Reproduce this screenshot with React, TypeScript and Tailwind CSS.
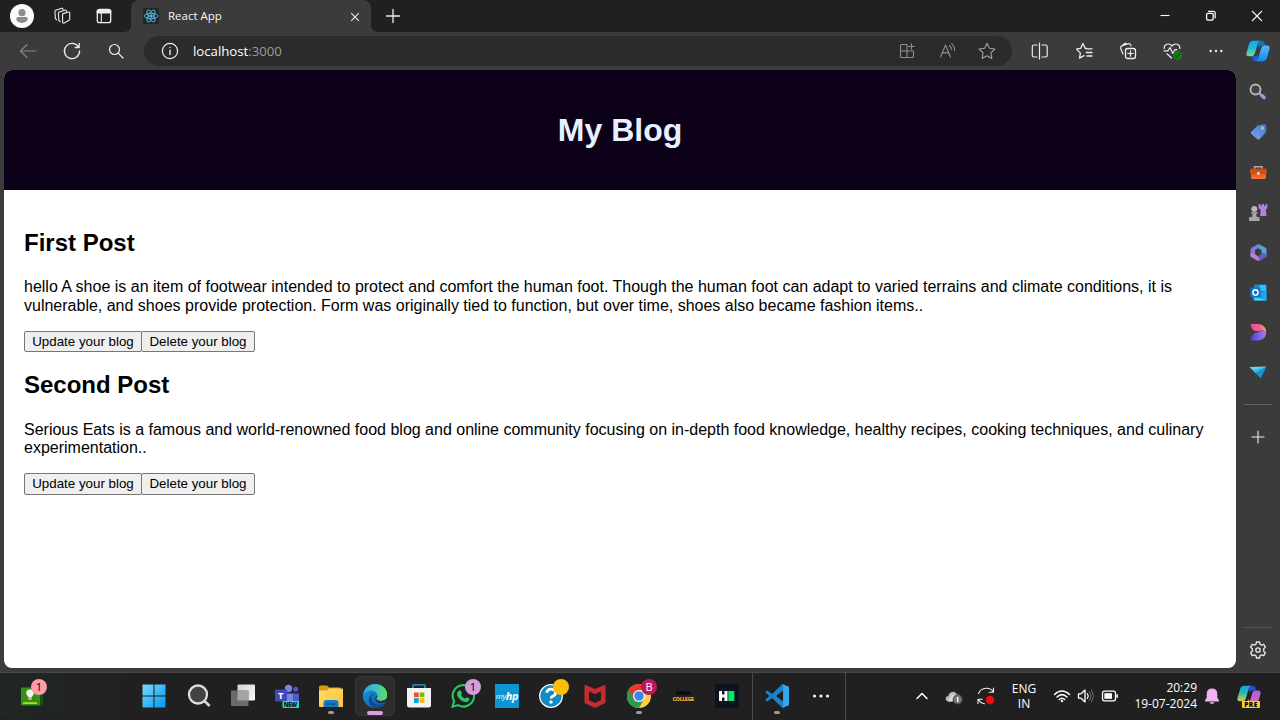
import type { ReactNode } from "react";

type IconProps = { children: ReactNode; className?: string };

function Icon({ children, className = "" }: IconProps) {
  return (
    <svg viewBox="0 0 24 24" className={`h-6 w-6 shrink-0 ${className}`} fill="none">
      {children}
    </svg>
  );
}

function Line({ children, className = "text-[#ededed]" }: IconProps) {
  return (
    <svg
      viewBox="0 0 24 24"
      className={`h-6 w-6 shrink-0 ${className}`}
      fill="none"
      stroke="currentColor"
      strokeWidth="1.1"
      strokeLinecap="round"
      strokeLinejoin="round"
    >
      {children}
    </svg>
  );
}

function Slot({ children, className = "w-11" }: IconProps) {
  return <div className={`relative flex h-full shrink-0 items-center justify-center ${className}`}>{children}</div>;
}

function SideSlot({ children, className = "h-10" }: IconProps) {
  return <div className={`flex w-11 shrink-0 items-center justify-center ${className}`}>{children}</div>;
}

function TitleBar() {
  return (
    <div className="flex h-8 bg-[#202020] pl-0.5">
      <Slot className="w-10">
        <Icon>
          <circle cx="12" cy="12" r="12" fill="#fbfbfb" />
          <circle cx="12" cy="8.7" r="3.6" fill="#8d8d8d" />
          <path d="M6.3 14.6q0-1.5 1.6-1.5h8.2q1.6 0 1.6 1.5c0 3-2.700 4.300-5.700 4.300s-5.700-1.300-5.700-4.300z" fill="#8d8d8d" />
        </Icon>
      </Slot>
      <Slot className="w-10">
        <Line>
          <path d="M12.500 10.700q0-.8.800-1.100l5.200-1.600q1.200-.3 1.200.9v6.200q0 .8-.7 1.200l-4.700 2.700q-1.500.7-1.600-.7z" />
          <path d="M10.300 17.700l-1.400-1.200-.5-7.200q0-.9.800-1.200l6.200-2.100q.8-.2 1.200 1.300M6.700 15.800l-1.300-1.200-.5-7.200q0-.9.800-1.200l6.200-2q.8-.2 1.200 1.300" />
        </Line>
      </Slot>
      <Slot>
        <Line>
          <rect x="5.300" y="5.300" width="13.400" height="13.400" rx="2.200" strokeWidth="1.300" />
          <path d="M5.300 6.500h13.400v2.500H5.300z" fill="currentColor" />
          <path d="M9.300 9v9.500" />
        </Line>
      </Slot>
      <div className="relative ml-[5px] flex h-8 w-[240px] items-center rounded-t-lg bg-[#3b3b3b] pl-3">
        <span className="absolute bottom-0 -left-1.5 h-1.5 w-1.5 bg-[radial-gradient(circle_at_0_0,#202020_5.500px,#3b3b3b_6px)]" />
        <span className="absolute -right-1.5 bottom-0 h-1.5 w-1.5 bg-[radial-gradient(circle_at_100%_0,#202020_5.500px,#3b3b3b_6px)]" />
        <svg viewBox="0 0 16 16" className="h-4 w-4" fill="none" stroke="#58c4dc" strokeWidth=".85">
          <rect width="16" height="16" rx="1.500" fill="#20242b" stroke="none" />
          <ellipse cx="8" cy="8" rx="6.800" ry="2.700" />
          <ellipse cx="8" cy="8" rx="6.800" ry="2.700" transform="rotate(60 8 8)" />
          <ellipse cx="8" cy="8" rx="6.800" ry="2.700" transform="rotate(120 8 8)" />
          <circle cx="8" cy="8" r="1.200" fill="#58c4dc" />
        </svg>
        <span className="ml-[9px] text-[11.500px] text-[#f5f5f5]">React App</span>
        <svg viewBox="0 0 10 10" className="mt-px mr-[11px] ml-auto h-2.5 w-2.5" stroke="#f0f0f0" strokeWidth="1.100">
          <path d="M1.200 1.200l7.600 7.600M8.800 1.200L1.200 8.800" />
        </svg>
      </div>
      <Slot className="w-[43px]">
        <Line><path d="M12 5.500v13M5.500 12h13" strokeWidth="1.300" /></Line>
      </Slot>
      <div className="ml-auto flex h-8">
        <Slot className="w-[46px]">
          <Line className="text-white"><path d="M7.500 11.500h9" strokeLinecap="butt" /></Line>
        </Slot>
        <Slot className="w-[46px]">
          <Line className="text-white">
            <rect x="7.600" y="9.300" width="6.600" height="6.800" rx="1.300" strokeWidth="1.300" />
            <path d="M9.500 7.300h4.700q2 0 2 2v4.500" strokeWidth="1.200" />
          </Line>
        </Slot>
        <Slot className="w-[46px]">
          <Line className="text-white"><path d="M7.400 7.400l9.200 9.200M16.600 7.400l-9.200 9.200" strokeWidth="1.300" /></Line>
        </Slot>
      </div>
    </div>
  );
}

function CopilotMark({ preview = false }: { preview?: boolean }) {
  const id = preview ? "cpPre" : "cpTop";
  return (
    <svg viewBox="0 0 24 24" className="h-6 w-6 shrink-0">
      <defs>
        <linearGradient id={id + "L"} x1="0" y1="0" x2="0" y2="1">
          <stop offset="0" stopColor="#16a4e8" />
          <stop offset=".45" stopColor={preview ? "#24b9b0" : "#21b7d8"} />
          <stop offset="1" stopColor={preview ? "#e2ce35" : "#6fe08c"} />
        </linearGradient>
        <linearGradient id={id + "R"} x1="0" y1="0" x2="0" y2="1">
          <stop offset="0" stopColor={preview ? "#a55fe8" : "#56b5ff"} />
          <stop offset="1" stopColor={preview ? "#f06590" : "#1488ee"} />
        </linearGradient>
      </defs>
      <path d="M11 1.800h4.600c2 0 2.500 1 3 2.700l.7 2.100h-3.500c-1.800 0-2.500 1-3 2.800z" fill={preview ? "#1d4fd0" : "#147ba8"} />
      <path d="M13 22.200H9.200c-1.900 0-2.400-1-2.900-2.600l-.8-2.300H9c1.800 0 2.400-1 3-2.800z" fill={preview ? "#f08a48" : "#2359d8"} />
      <path d="M7.600 1.800h6.300c-1.500.6-1.900 2-2.400 3.700l-2.600 8.800c-.6 2.100-1.500 3-3.300 3H3c-2.400 0-3-1.700-2.400-3.800l2.600-8.800c.7-2.100 2-2.900 4.400-2.900z" fill={`url(#${id}L)`} />
      <path d="M16.400 22.200h-6.300c1.500-.6 1.900-2 2.400-3.700l2.600-8.900c.6-2.100 1.500-3 3.300-3H21c2.400 0 3 1.700 2.400 3.800l-2.600 8.900c-.7 2.100-2 2.900-4.400 2.900z" fill={`url(#${id}R)`} />
    </svg>
  );
}

function Toolbar() {
  return (
    <div className="flex h-[38px] bg-[#3b3b3b] pl-1.5">
      <Slot>
        <Line className="text-[#858585]"><path d="M20 12H4.500M11 5.500L4.500 12l6.500 6.500" /></Line>
      </Slot>
      <Slot>
        <Line><path d="M18.600 8.200A7.600 7.600 0 1 0 19.600 12M19.200 4.500v4h-4" strokeWidth="1.300" /></Line>
      </Slot>
      <Slot>
        <Line><circle cx="10.500" cy="10.500" r="5" strokeWidth="1.200" /><path d="M14.200 14.200l4.800 4.800" strokeWidth="1.200" /></Line>
      </Slot>
      <div className="mt-1 ml-1.5 flex h-[30px] w-[868px] items-center rounded-full bg-[#2b2b2b] pr-[5px] pl-3.5">
        <Line>
          <circle cx="12" cy="12" r="7.600" strokeWidth="1.200" />
          <path d="M12 11.300v4.300M12 8.400v.2" strokeWidth="1.400" />
        </Line>
        <span className="mt-0.5 ml-[11px] text-[13.200px] text-white">
          localhost<span className="text-[#9b9b9b]">:3000</span>
        </span>
        <div className="ml-auto flex h-full">
          <Slot className="w-10">
            <Line className="text-[#8f8f8f]">
              <path d="M11.700 5.500H6.500q-1 0-1 1v11q0 1 1 1h11q1 0 1-1v-4.800q0-.7-.7-.7H5.500M12 5.500v13M16.500 4.800v5.400M13.800 7.500h5.400" />
            </Line>
          </Slot>
          <Slot className="w-10">
            <Line className="text-[#8f8f8f]">
              <path d="M5.500 18L10.500 6l5 12M7.300 13.900h6.400M14.500 6.700q2 1.600 1.800 3.800M16.600 4.600q3.200 2.600 3 6.900" />
            </Line>
          </Slot>
          <Slot className="w-10">
            <Line className="text-[#a0a0a0]">
              <path d="M12 4.200l2.400 5 5.500.8-4 3.900 1 5.500-4.900-2.600-4.900 2.600 1-5.500-4-3.900 5.500-.8z" />
            </Line>
          </Slot>
        </div>
      </div>
      <div className="ml-1.5 flex">
        <Slot>
          <Line>
            <path d="M11.500 4v16M9 6H6q-1.700 0-1.700 1.700v8.600Q4.300 18 6 18h3M14 6h3.500q1.700 0 1.700 1.700v8.600q0 1.700-1.700 1.700H14" strokeWidth="1.200" />
          </Line>
        </Slot>
        <Slot>
          <Line>
            <path d="M14.500 9.500h-1.200L10.900 4.500 8.700 9.300l-3.500.5q-.8.200-.2.800l3.400 3.500-.9 5 4.600-2.500M15 9.800h5M14.300 13.500h5.700M15 17h5" strokeWidth="1.300" />
          </Line>
        </Slot>
        <Slot>
          <Line>
            <rect x="9.500" y="9.500" width="10" height="10" rx="2.200" strokeWidth="1.300" />
            <path d="M14.500 11.800v5.400M11.800 14.500h5.400M7 15l-2.300-5.800q-.5-1.700 1.100-2.300l6.500-2.100q1.700-.4 2.300 1.100l.3 1M5 7.700l3-2.700q1-.8 2.300-.6" strokeWidth="1.200" />
          </Line>
        </Slot>
        <Slot>
          <Line>
            <path d="M4.200 9.500C3.800 5.300 9 3.300 12 7c3-3.700 8.200-1.700 7.800 2.500M4 11.800h4l2-3.300 2.800 6 2-3.800h2M7 14.800l4.500 4.200" strokeWidth="1.200" />
            <circle cx="17.500" cy="16.500" r="4.700" fill="#147a14" stroke="none" />
            <path d="M15.500 16.600l1.400 1.400 2.700-2.900" stroke="#064d08" />
          </Line>
        </Slot>
        <Slot>
          <Icon>
            <circle cx="6.700" cy="12" r="1.200" fill="#eee" />
            <circle cx="12" cy="12" r="1.200" fill="#eee" />
            <circle cx="17.300" cy="12" r="1.200" fill="#eee" />
          </Icon>
        </Slot>
        <Slot className="w-10"><CopilotMark /></Slot>
      </div>
    </div>
  );
}

function Post({ title, children }: { title: string; children: ReactNode }) {
  const button =
    "h-[21.500px] rounded-[2px] border border-[#767676] bg-[#efefef] px-[7px] text-[13.333px] leading-[18px] text-black";
  return (
    <article className="mb-5 h-[122.500px] text-black">
      <h2 className="text-2xl leading-[27px] font-bold">{title}</h2>
      <p className="mt-[22.200px] text-base leading-[18.700px] whitespace-nowrap">{children}</p>
      <div className="mt-[15.300px] flex">
        <button className={button + " w-[118px]"}>Update your blog</button>
        <button className={button + " -ml-px w-[114px]"}>Delete your blog</button>
      </div>
    </article>
  );
}

function BlogPage() {
  return (
    <main className="h-[598px] w-[1232px] shrink-0 overflow-hidden rounded-lg bg-white font-['Liberation_Sans',Arial,sans-serif]">
      <header className="flex h-[119.500px] items-center justify-center bg-[#0d0019]">
        <h1 className="text-[32px] leading-9 font-bold text-[#e6f1ff]">My Blog</h1>
      </header>
      <section className="px-5 pt-[39.400px]">
        <Post title="First Post">
          hello A shoe is an item of footwear intended to protect and comfort the human foot. Though the human foot can adapt to varied terrains and climate conditions, it is
          <br />
          vulnerable, and shoes provide protection. Form was originally tied to function, but over time, shoes also became fashion items..
        </Post>
        <Post title="Second Post">
          Serious Eats is a famous and world-renowned food blog and online community focusing on in-depth food knowledge, healthy recipes, cooking techniques, and culinary
          <br />
          experimentation..
        </Post>
      </section>
    </main>
  );
}

function Sidebar() {
  return (
    <aside className="flex flex-1 flex-col items-center pt-0.5">
      <SideSlot>
        <Icon>
          <circle cx="9.500" cy="9.500" r="5" stroke="#b9b9b9" strokeWidth="1.800" fill="#424242" />
          <path d="M13.300 13.300l2 2" stroke="#aaa" strokeWidth="2" />
          <path d="M15.500 15.300l2.600 2.300" stroke="#bd8ae0" strokeWidth="3.400" strokeLinecap="round" />
        </Icon>
      </SideSlot>
      <SideSlot>
        <Icon>
          <defs><linearGradient id="tag" x1="1" y1="0" x2="0" y2="1"><stop stopColor="#4676c8" /><stop offset="1" stopColor="#79a8f2" /></linearGradient></defs>
          <path d="M12.500 5.200l6-.9q1.500-.1 1.600 1.300l.1 5.500q0 .8-.5 1.400l-6.200 6.700q-1 1-2.100.1l-6-5.400q-1.200-1.100-.1-2.200l5.800-5.800q.6-.6 1.400-.7z" fill="url(#tag)" />
          <circle cx="16.500" cy="8" r="1.500" fill="#fff" /><circle cx="16.600" cy="8" r=".8" fill="#234" />
        </Icon>
      </SideSlot>
      <SideSlot>
        <Icon>
          <defs><linearGradient id="case" x1="0" y1="0" x2="0" y2="1"><stop stopColor="#c8400f" /><stop offset=".4" stopColor="#e2571c" /><stop offset="1" stopColor="#ff7130" /></linearGradient></defs>
          <path d="M8.500 9V6.700h7.500V9" stroke="#aeb2ad" strokeWidth="1.500" />
          <path d="M5.500 8.500h13.800q1.500 0 1.500 1.500v3.500h-.8v4q0 1.500-1.500 1.500h-12q-1.500 0-1.500-1.500v-4h-1V10q0-1.500 1.500-1.500z" fill="url(#case)" />
          <path d="M4.500 13h16" stroke="#a9360b" strokeWidth=".7" />
          <circle cx="12.400" cy="13.300" r="1.600" fill="#ddd1ca" />
        </Icon>
      </SideSlot>
      <SideSlot>
        <Icon>
          <path d="M12.500 4h2v1.800h1.500V4h2v1.800h1.500V4h1.800v4.200l-1.500 1.200.8 6.600h-6.400l.4-6.600-2.100-1.200z" fill="#b083dd" />
          <circle cx="8.300" cy="9" r="3" fill="#b8b8b8" />
          <path d="M5 12.300h6.600v1.500h-1.500l.6 3.200h2q.9 0 .9 1v3H3v-3q0-1 1-1h2l.6-3.200H5z" fill="#a6a6a6" />
        </Icon>
      </SideSlot>
      <SideSlot>
        <Icon>
          <path d="M12.500 4l7 3.700q1 .6 1 2v7l-5-3v-3.600l-5-2.600z" fill="#51a4dc" />
          <path d="M12.500 4L6 7.500Q4.500 8.200 4.500 10v5.500l4.700-1.600V9.800l5.300-2.700z" fill="#8278d9" />
          <path d="M4.500 13v2.700q0 1 1 1.600l5.500 3.100q1.200.7 2.500 0l6-3.500q1-.7 1-2.100l-8 2-3.300-2.500z" fill="#b783cf" />
          <path d="M15.500 12.500l5 1.500q0 2-1 2.700l-6 3.500-1.500-4 3.500-2z" fill="#5763c2" />
        </Icon>
      </SideSlot>
      <SideSlot>
        <Icon>
          <path d="M8.500 4.500h11q1 0 1 1v14q0 1-1 1H7v-5z" fill="#1589cf" />
          <path d="M13.500 5h6.500v6h-6.500z" fill="#37bff3" /><path d="M8 15l12.500-4v8.500q0 1-1 1H9q-1 0-1-1z" fill="#1ba9e5" />
          <path d="M8 17l12.500 3.200H9z" fill="#58d2f5" />
          <rect x="4.500" y="7.500" width="10" height="10" rx="1" fill="#0876c9" />
          <ellipse cx="9.500" cy="12.500" rx="2.500" ry="2.700" stroke="#fff" strokeWidth="1.500" />
        </Icon>
      </SideSlot>
      <SideSlot>
        <Icon>
          <defs>
            <linearGradient id="dTop" x1="0" x2="1"><stop stopColor="#ef4f8b" /><stop offset=".6" stopColor="#f35f95" /><stop offset="1" stopColor="#ffad72" /></linearGradient>
            <linearGradient id="dBottom" x1="0" x2="1"><stop stopColor="#4d44c9" /><stop offset="1" stopColor="#a879f2" /></linearGradient>
          </defs>
          <path d="M4.800 4h7c5 0 8.400 3.500 8.400 8.500-2-2.600-4.700-2.300-7.400-1.600C8 12 4.800 8.500 4.800 4z" fill="url(#dTop)" />
          <path d="M4.500 20.500c0-6 5-8.300 9.800-9.200 3.400-.5 5.700 0 5.900 1 0 4.600-3.200 8.200-8.200 8.200z" fill="url(#dBottom)" />
        </Icon>
      </SideSlot>
      <SideSlot>
        <Icon>
          <path d="M3.500 7l17-.5-11 6.600z" fill="#6bd3f5" />
          <path d="M9.500 13l11-6.500-5.700 11.700z" fill="#1593d4" />
          <path d="M3.500 7l6 6.100 11-6.600-13 3.200z" fill="#38b8ea" /><path d="M9.500 13v4l2.400-2.500z" fill="#0a65a4" />
        </Icon>
      </SideSlot>
      <div className="mt-3 h-px w-7 bg-[#626262]" />
      <SideSlot className="mt-3 h-10"><Line><path d="M12 6v12M6 12h12" /></Line></SideSlot>
      <div className="mt-auto h-px w-7 bg-[#545454]" />
      <SideSlot className="h-11">
        <Line>
          <path d="M10.500 4h3l.5 2.200 1.600.9 2.200-.7 1.600 2.700-1.700 1.600v2.600l1.700 1.600-1.600 2.700-2.200-.7-1.600.9-.5 2.200h-3L10 17.800l-1.600-.9-2.200.7-1.600-2.700 1.700-1.600v-2.600L4.600 9.100l1.600-2.700 2.200.7 1.600-.9z" strokeWidth="1.300" />
          <circle cx="12" cy="12" r="2.200" strokeWidth="1.300" />
        </Line>
      </SideSlot>
    </aside>
  );
}

function Badge({ children, className }: IconProps) {
  return <span className={`absolute flex h-4 w-4 items-center justify-center rounded-full text-[11px] ${className}`}>{children}</span>;
}

function RunDot() {
  return <span className="absolute bottom-[5px] h-[3px] w-1.5 rounded-full bg-[#9a9a9a]" />;
}

function Taskbar() {
  return (
    <footer className="flex h-12 border-t border-[#474747] bg-[#202020] pb-px">
      <div className="flex w-[132px] bg-linear-to-r from-[#202725] to-[#202020] pl-2.5">
        <Slot>
          <Icon>
            <path d="M15 4l8 1v16.500l-4 .5z" fill="#174f13" /><rect x="1" y="3.500" width="19" height="18" rx="1" fill="#359015" />
            <path d="M10 5.500c-3 0-4.200 2.200-3.700 4.300.4 1.800 1.800 2.200 2 3.800h3.500c.2-1.600 1.500-2 2-3.800C14.300 7.700 13 5.500 10 5.500zM8.500 14.300h3.200v1.200H8.500z" fill="#f1f8e9" />
            <path d="M3 18.300h14v1.600H3z" fill="#b4ea18" />
          </Icon>
          <Badge className="top-[6px] left-[21px] bg-[#ff9ba7] text-black">1</Badge>
        </Slot>
      </div>
      <Slot>
        <Icon>
          <defs><linearGradient id="win" gradientUnits="userSpaceOnUse" x1="0" y1="0" x2="24" y2="24"><stop stopColor="#78dcff" /><stop offset="1" stopColor="#0096ee" /></linearGradient></defs>
          <path d="M.5.500H11.500V11.500H.5zM12.500.500h11v11h-11zM.5 12.500h11v11H.5zM12.500 12.500h11v11h-11z" fill="url(#win)" />
        </Icon>
      </Slot>
      <Slot className="ml-px w-11">
        <Icon>
          <circle cx="11" cy="10.500" r="9" fill="#424242" stroke="#dedede" strokeWidth="2.300" />
          <path d="M17.800 17.300l4 4" stroke="#d5d5d5" strokeWidth="2.700" strokeLinecap="round" />
        </Icon>
      </Slot>
      <Slot>
        <Icon>
          <defs><linearGradient id="task" x1="0" x2="1" y2="1"><stop stopColor="#d5d5d5" /><stop offset="1" stopColor="#fafafa" /></linearGradient></defs>
          <rect x="6.500" y="0.500" width="17.500" height="16" rx="1" fill="url(#task)" /><rect x="0" y="6.500" width="17.500" height="15.500" rx="1" fill="#6b6b6b" /><path d="M6.500 6.500h11v10h-11z" fill="#a4a4a4" />
        </Icon>
      </Slot>
      <Slot>
        <Icon>
          <circle cx="13.500" cy="4.500" r="3.700" fill="#7b83eb" /><circle cx="20.700" cy="5.200" r="2.500" fill="#5059c9" />
          <path d="M9 9.500h10v9H9z" fill="#7b83eb" /><path d="M18 9.500h6v7q0 2-2 2h-4z" fill="#5059c9" />
          <rect x="0" y="5.500" width="12" height="12" rx="1" fill="#4149b5" />
          <text x="3.100" y="15" fontSize="9.500" fontWeight="700" fill="#fff">T</text>
          <rect x="7.500" y="17" width="17" height="7" rx="1" fill="#2bd9cb" />
          <text x="8.800" y="22.800" fontSize="6" fontWeight="800" fill="#00191a" textLength="13.500">NEW</text>
        </Icon>
      </Slot>
      <Slot>
        <Icon>
          <path d="M0 3q0-1.500 1.500-1.500H8l2 2h11.500V8H0z" fill="#d89c10" />
          <defs><linearGradient id="folder" x1="0" y1="0" x2="1" y2="1"><stop stopColor="#ffdc6c" /><stop offset="1" stopColor="#ffc23b" /></linearGradient></defs>
          <path d="M0 6.500h8l2-2h13q1.500 0 1.500 1.500v16q0 1-1 1H1q-1 0-1-1z" fill="url(#folder)" />
          <path d="M4.500 23v-4q0-3 3-3h9q3 0 3 3v4z" fill="#1579c9" /><path d="M8 20h8" stroke="#0b4f92" strokeWidth="1.300" strokeLinecap="round" />
        </Icon>
        <RunDot />
      </Slot>
      <Slot>
        <span className="absolute top-[3px] left-[2px] h-10 w-10 rounded-[5px] border border-[#363636] bg-[#2d2d2d]" />
        <Icon className="relative">
          <defs>
            <linearGradient id="edgeTop" x1="0" x2="1"><stop stopColor="#2ba8df" /><stop offset=".55" stopColor="#38c5be" /><stop offset="1" stopColor="#66df55" /></linearGradient>
            <linearGradient id="edgeLow" x1="0" y1="0" x2="1" y2="1"><stop stopColor="#1b9ae2" /><stop offset="1" stopColor="#104f9d" /></linearGradient>
          </defs>
          <circle cx="12" cy="12" r="12" fill="url(#edgeLow)" />
          <path d="M.3 10.200C2.300 2 8 0 12 0c7.500 0 12.300 5.600 12.300 10.800 0 4.200-3.200 6.200-6.500 6.200-2.500 0-4.600-1-4.600-2.200 0-.8 1.200-1.200 1.200-3.200 0-2.500-2.800-4.800-6.400-4.800-3 0-5.800 1.300-7.700 3.400z" fill="url(#edgeTop)" />
          <path d="M11 9.100c-3 2-3.200 6-1.500 8.500 2.800 4.200 7.800 4.200 12.900 1.200.5-.3.900.1.500.7-3.100 4.400-9.600 5.800-14.100 2.800C4 19 5.300 11.500 11 9.100z" fill="#104b91" />
          <path d="M14.300 11.500c.3 1.800-1.200 2.400-1.100 3.300 0 1.300 2.200 2.300 4.800 2.200 2.200 0 4.600-1 5.600-2.800l-.8 3.500c-4.600 2.300-10 1.500-10.500-2.200-.2-1.900.8-3.500 2-4z" fill="#2d2d2d" />
        </Icon>
        <span className="absolute bottom-[4px] h-1 w-4 rounded-full bg-[#d89ee0]" />
      </Slot>
      <Slot>
        <Icon>
          <path d="M6 5V1.500q0-.7.700-.7h10.600q.7 0 .7.700V5" stroke="#28a8dc" strokeWidth="1.300" />
          <path d="M0 4h24v17q0 2.500-2.500 2.500h-19Q0 23.500 0 21z" fill="#f3f3f3" />
          <path d="M7 8.500h4.700v4.700H7z" fill="#f25022" /><path d="M12.700 8.500h4.700v4.700h-4.700z" fill="#7fba00" /><path d="M7 14.200h4.700v4.700H7z" fill="#00a4ef" /><path d="M12.700 14.200h4.700v4.700h-4.700z" fill="#ffb900" />
        </Icon>
      </Slot>
      <Slot>
        <Icon>
          <path d="M1.500 22.800l1.600-5.700a10.700 10.700 0 1 1 4 4z" stroke="#25c866" strokeWidth="2.100" />
          <path d="M8.500 6.300q1-.3 1.500.8l.9 2q.2.600-1 1.900 1.500 2.700 4.200 3.800 1.300-1.700 1.800-1.500l2.200 1.100q.8.500.3 1.700-1.200 2.300-3.700 2-5.500-1-8.300-6.200-1.500-3.500 2.100-5.600z" fill="#25c866" />
        </Icon>
        <Badge className="top-[6px] left-[24px] bg-[#d49ce0] text-black">1</Badge>
      </Slot>
      <Slot>
        <div className="flex h-6 w-6 items-center justify-center bg-[#0d95d3] text-[8px] tracking-[-.4px] text-white italic">my<b className="text-[11px]">hp</b></div>
      </Slot>
      <Slot>
        <Icon><circle cx="12" cy="12" r="11.300" fill="#128bc4" stroke="#fff" strokeWidth="1.300" /><path d="M7.700 8.800q.6-3.800 4.600-3.600c5.800.3 5.200 5.800 1.300 7.100-1.200.5-1.500 1-1.500 2.300" stroke="#fff" strokeWidth="2.700" /><circle cx="12" cy="18" r="1.700" fill="#fff" /></Icon>
        <Badge className="top-[6px] left-[24px] bg-[#ffbd08]">{null}</Badge>
      </Slot>
      <Slot>
        <Icon>
          <path d="M1.500.500L12 5 22.500.500V19L12 24 1.500 19z" fill="#c52c30" /><path d="M6 7.200l6 3 6-3v8.700l-6 3-6-3z" fill="#202020" />
        </Icon>
      </Slot>
      <Slot>
        <Icon>
          <circle cx="12" cy="12" r="12" fill="#ffce43" />
          <path d="M12 12L1.600 6A12 12 0 0 0 12 24l5.200-9z" fill="#2a9d4b" />
          <path d="M1.600 6A12 12 0 0 1 22.400 6H12v6l-5.200 3z" fill="#e33b2e" />
          <circle cx="12" cy="12" r="6" fill="#fff" /><circle cx="12" cy="12" r="4.800" fill="#3d84ed" />
        </Icon>
        <Badge className="top-[6px] left-[24px] bg-[#bf175c] text-[9px] text-white">B</Badge>
        <RunDot />
      </Slot>
      <Slot>
        <div className="flex flex-col items-center text-[5.500px] leading-[6px] font-extrabold tracking-[-.5px]"><span className="text-[#060606]">APNA</span><span className="text-[#e5a42a]">COLLEGE</span></div>
      </Slot>
      <Slot>
        <Icon><path d="M0 0h24v24H0z" fill="#0e141e" /><path d="M4 7h3v3.500h2.500V7h3v10h-3v-3.500H7V17H4z" fill="#fff" /><path d="M13.300 7h6v10h-6z" fill="#00ea64" /></Icon>
      </Slot>
      <div className="-mb-px ml-[3px] w-px bg-[#4b4b4b]" />
      <Slot className="ml-0.5 w-11">
        <Icon>
          <path d="M17.500 0L24 3v18l-6.500 3L7 14l-4.500 3.500L0 16l4.500-4L0 8l2.500-1.500L7 10zM18 6.500L11 12l7 5.500z" fill="#1684cb" fillRule="evenodd" />
          <path d="M17.500 0L24 3v18l-6.500 3q.7-1 .7-2V2q0-1.300-.7-2z" fill="#35a7ee" />
        </Icon>
        <RunDot />
      </Slot>
      <Slot>
        <Icon><circle cx="5.500" cy="12" r="1.600" fill="#f5f5f5" /><circle cx="12" cy="12" r="1.600" fill="#f5f5f5" /><circle cx="18.500" cy="12" r="1.600" fill="#f5f5f5" /></Icon>
      </Slot>
      <div className="-mb-px ml-0.5 w-px bg-[#4b4b4b]" />
      <div className="ml-auto flex h-full">
        <Slot className="w-8"><Line className="text-white"><path d="M7 14.500L12 9.500l5 5" strokeWidth="1.500" /></Line></Slot>
        <Slot className="w-8">
          <Icon>
            <path d="M7 17.500c-4 0-4.500-5-.8-5.500C7 7.500 13 6 15 10.500c3 0 4.500 2 4 4.500l-3 2.500z" fill="#bbb" /><path d="M10 10l5.500 3.500-6 4H6z" fill="#dadada" />
            <circle cx="15.700" cy="15.500" r="4.500" fill="#777" stroke="#4b4b4b" /><path d="M15.700 13v5" stroke="#fff" strokeWidth="1.400" />
          </Icon>
        </Slot>
        <Slot className="w-8">
          <Line><path d="M4.500 9.500c3-7 12-6.500 15-1.500M19.500 4v4.300h-4.300M4.500 15.500c1 2 3 4 6 4.200M4 19.500v-4.300h4.300" strokeWidth="1.100" /><circle cx="16" cy="16" r="4.200" fill="#fa0b0b" stroke="none" /></Line>
        </Slot>
        <div className="flex w-11 flex-col items-center justify-center text-[12px] leading-[15px] text-white"><span>ENG</span><span>IN</span></div>
        <Slot className="ml-1 w-6">
          <Line className="text-white"><path d="M4.500 10.500q7.500-7 15 0M7 13q5-4.700 10 0M9.300 15.500q2.700-2.600 5.400 0" strokeWidth="1.500" /><circle cx="12" cy="17" r="1.200" fill="currentColor" stroke="none" /></Line>
        </Slot>
        <Slot className="w-6">
          <Line className="text-white"><path d="M4.500 9.800H7l4-3.700v11.800l-4-3.700H4.500z" strokeWidth="1.300" /><path d="M13.200 9.500q2 2.500 0 5" /><path d="M15.200 7.500q3.500 4.500 0 9M17.200 6q4.300 6 0 12" stroke="#666" /></Line>
        </Slot>
        <Slot className="w-6">
          <Line className="text-white"><rect x="4.500" y="7.200" width="13" height="9.600" rx="2" strokeWidth="1.300" /><path d="M6.900 9.700h6.600v4.600H6.900z" fill="currentColor" /><path d="M19.200 10.700v2.600" strokeWidth="1.500" /></Line>
        </Slot>
        <div className="flex w-[75px] flex-col items-end justify-center text-[12px] leading-[16px] whitespace-nowrap text-white"><span>20:29</span><span>19-07-2024</span></div>
        <Slot className="ml-[3px] w-6">
          <Icon><path d="M12 4.500q5.300 0 5.300 5.500v3.500l1.700 3v1H5v-1l1.700-3V10q0-5.500 5.300-5.500zM9.500 18.300h5q-.5 1.600-2.500 1.600t-2.500-1.600z" fill="#eeb5f2" /></Icon>
        </Slot>
        <Slot className="ml-1 w-[42px]">
          <CopilotMark preview />
          <span className="absolute bottom-[11px] left-[14px] flex h-[7px] w-[18px] items-center justify-center rounded-[1px] bg-[#ffce1c] text-[6.500px] font-extrabold tracking-[.4px] text-black">PRE</span>
        </Slot>
        <div className="w-2.5" />
      </div>
    </footer>
  );
}

export default function App() {
  return (
    <div className="flex h-[720px] w-[1280px] flex-col overflow-hidden bg-[#3b3b3b] font-['Open_Sans','Noto_Sans',sans-serif] select-none">
      <TitleBar />
      <Toolbar />
      <div className="flex h-[602px] pl-1">
        <BlogPage />
        <Sidebar />
      </div>
      <Taskbar />
    </div>
  );
}
